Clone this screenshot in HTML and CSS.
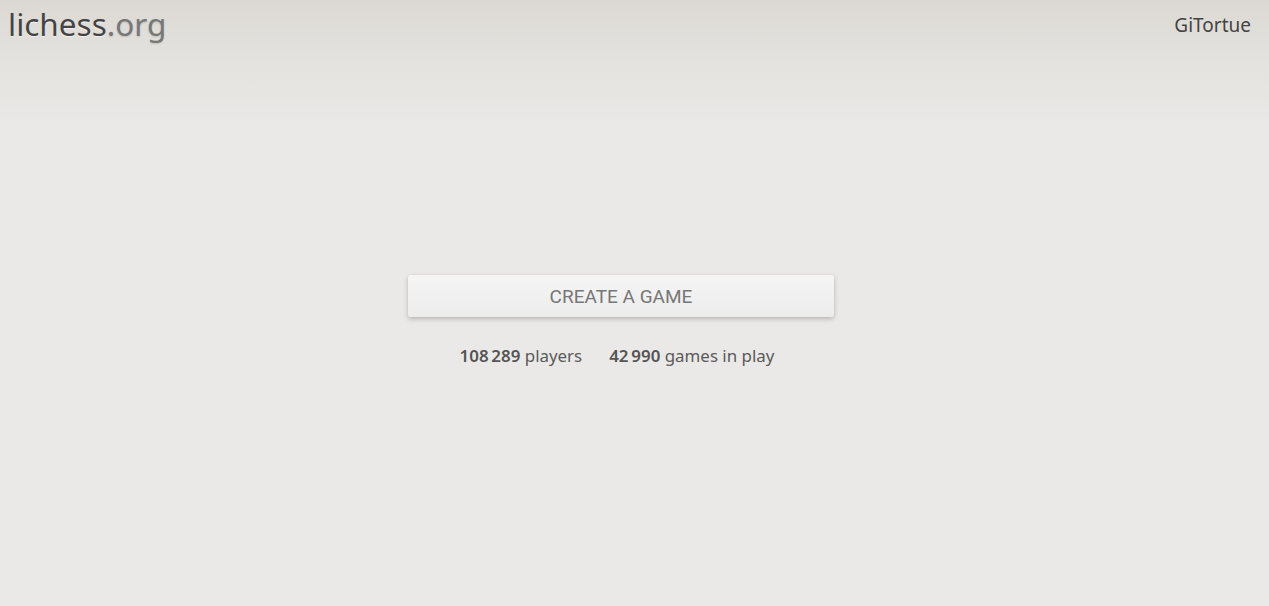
FILE: index.html
```html
<!DOCTYPE html>
<html>
<head>
<meta charset="utf-8">
<link rel="stylesheet" href="styles.css">
</head>
<body>
<header class="top">
  <a class="logo">lichess<span class="tld">.org</span></a>
  <a class="user">GiTortue</a>
</header>
<main class="lobby">
  <button class="create">CREATE A GAME</button>
  <div class="counters">
    <span><strong>108&#8239;289</strong> players</span>
    <span><strong>42&#8239;990</strong> games in play</span>
  </div>
</main>
</body>
</html>
```

FILE: styles.css
```css
html, body {
  margin: 0;
  padding: 0;
  height: 100%;
}
body {
  font-family: "Noto Sans", "Open Sans", sans-serif;
  background: linear-gradient(to bottom, #dcd9d4 0px, #e4e2de 60px, #ebe9e7 125px, #ebe9e7 100%);
  color: #555;
  overflow: hidden;
}
.top {
  display: flex;
  justify-content: space-between;
  align-items: flex-start;
  padding: 0 18px 0 8px;
  height: 60px;
}
.logo {
  font-size: 31.5px;
  line-height: 47px;
  color: #444;
  text-shadow: 0 1px 1px rgba(255,255,255,0.6);
}
.logo .tld {
  color: #777;
  text-shadow: 0 1px 2px rgba(0,0,0,0.15);
}
.user {
  font-size: 19px;
  line-height: 50px;
  color: #444;
}
.lobby {
  display: flex;
  flex-direction: column;
  align-items: center;
  padding-top: 215px;
  padding-right: 27px;
}
.create {
  width: 426px;
  height: 42px;
  border: none;
  border-radius: 3px;
  background: linear-gradient(to bottom, #f5f5f5, #ececec);
  box-shadow: 0 2px 5px rgba(0,0,0,0.22), 0 0 1px rgba(0,0,0,0.1);
  font-family: Roboto, "Noto Sans", sans-serif;
  font-size: 19px;
  color: #777;
  cursor: pointer;
}
.counters {
  margin-top: 27px;
  margin-right: 8px;
  display: flex;
  gap: 27px;
  font-size: 16.9px;
  color: #5a5a5a;
}
.counters strong {
  font-weight: 600;
  color: #555;
}
```
